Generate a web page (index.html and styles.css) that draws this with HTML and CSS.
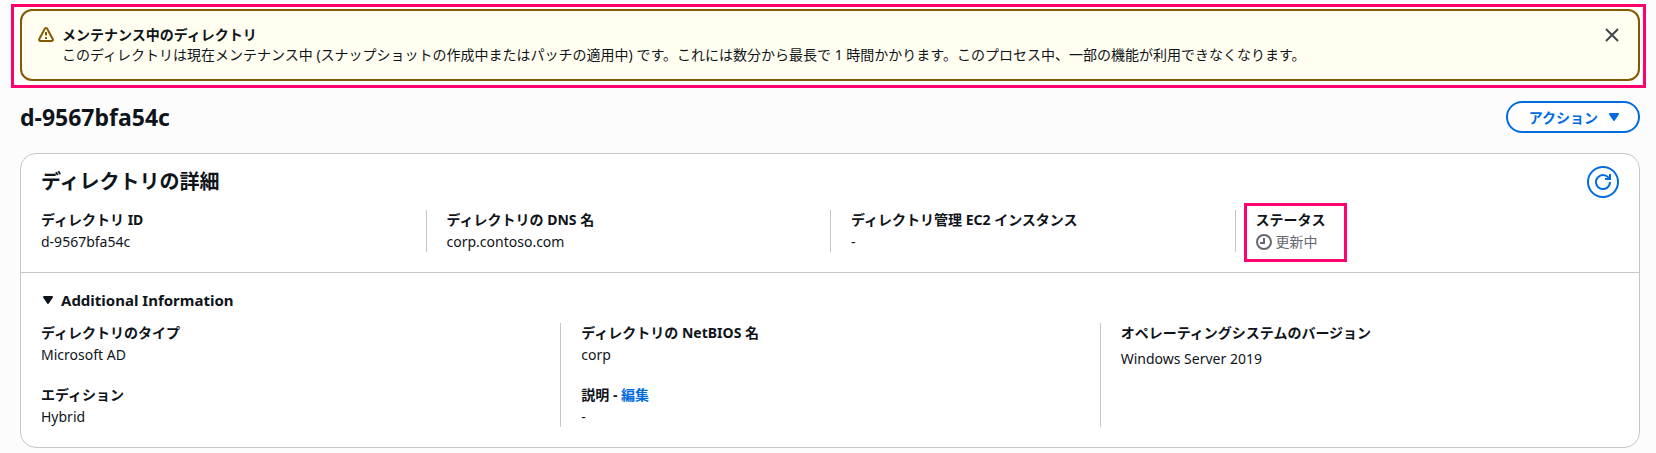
FILE: index.html
```html
<!DOCTYPE html>
<html lang="ja">
<head>
    <meta charset="UTF-8">
    <meta name="viewport" content="width=device-width, initial-scale=1.0">
    <title>d-9567bfa54c</title>
    <link rel="stylesheet" href="styles.css">
</head>
<body>
    <div class="callout">
        <div class="alert" role="alert">
            <svg class="icon alert-icon" viewBox="0 0 16 16" aria-hidden="true">
                <path d="M6.7 1.9a1.4 1.4 0 0 1 2.6 0l5.5 10.4a1.2 1.2 0 0 1-1.1 1.7H2.3a1.2 1.2 0 0 1-1.1-1.7z"/>
                <path d="M8 5v3.500M8 10v2"/>
            </svg>
            <div class="alert-text">
                <strong>メンテナンス中のディレクトリ</strong>
                <p>このディレクトリは現在メンテナンス中 (スナップショットの作成中またはパッチの適用中) です。これには数分から最長で 1 時間かかります。このプロセス中、一部の機能が利用できなくなります。</p>
            </div>
            <button class="close-button" type="button" aria-label="閉じる">
                <svg class="icon" viewBox="0 0 16 16" aria-hidden="true">
                    <path d="m2 2 12 12M14 2 2 14"/>
                </svg>
            </button>
        </div>
    </div>

    <main>
        <div class="page-header">
            <h1>d-9567bfa54c</h1>
            <button class="action-button" type="button">
                アクション
                <svg class="icon caret" viewBox="0 0 16 16" aria-hidden="true">
                    <path d="M4 5h8l-4 6z"/>
                </svg>
            </button>
        </div>

        <section class="card">
            <div class="card-top">
                <div class="card-header">
                    <h2>ディレクトリの詳細</h2>
                    <button class="refresh-button" type="button" aria-label="更新">
                        <svg class="icon" viewBox="0 0 16 16" aria-hidden="true">
                            <path d="M10 5h5V0"/>
                            <path d="M15 8a7 7 0 1 1-.7-3"/>
                        </svg>
                    </button>
                </div>
                <div class="columns four">
                    <dl>
                        <dt>ディレクトリ ID</dt>
                        <dd>d-9567bfa54c</dd>
                    </dl>
                    <dl>
                        <dt>ディレクトリの DNS 名</dt>
                        <dd>corp.contoso.com</dd>
                    </dl>
                    <dl>
                        <dt>ディレクトリ管理 EC2 インスタンス</dt>
                        <dd>-</dd>
                    </dl>
                    <dl class="marked">
                        <dt>ステータス</dt>
                        <dd class="status">
                            <svg class="icon" viewBox="0 0 16 16" aria-hidden="true">
                                <circle cx="8" cy="8" r="7"/>
                                <path d="M8 4v5H4"/>
                            </svg>
                            更新中
                        </dd>
                    </dl>
                </div>
            </div>

            <details open>
                <summary>
                    <svg class="icon caret" viewBox="0 0 16 16" aria-hidden="true">
                        <path d="M3 5h8l-4 6z"/>
                    </svg>
                    Additional Information
                </summary>
                <div class="columns three">
                    <dl>
                        <dt>ディレクトリのタイプ</dt>
                        <dd>Microsoft AD</dd>
                        <dt>エディション</dt>
                        <dd>Hybrid</dd>
                    </dl>
                    <dl>
                        <dt>ディレクトリの NetBIOS 名</dt>
                        <dd>corp</dd>
                        <dt>説明 - <a href="#">編集</a></dt>
                        <dd>-</dd>
                    </dl>
                    <dl class="spaced">
                        <dt>オペレーティングシステムのバージョン</dt>
                        <dd>Windows Server 2019</dd>
                    </dl>
                </div>
            </details>
        </section>
    </main>
</body>
</html>
```

FILE: styles.css
```css
*,
*::before,
*::after {
    box-sizing: border-box;
}

body {
    margin: 0;
    background-color: #fcfcfd;
    color: #0f141a;
    font-family: "Noto Sans", "Noto Sans CJK JP", sans-serif;
    font-size: 14px;
    line-height: 20px;
}

h1,
h2,
p,
dl,
dd {
    margin: 0;
}

button {
    font-family: inherit;
    cursor: pointer;
}

a {
    color: #006ce0;
    text-decoration: none;
}

.icon {
    display: block;
    flex: none;
    width: 16px;
    height: 16px;
    fill: none;
    stroke: currentColor;
    stroke-width: 2;
    overflow: visible;
}

.caret path {
    fill: currentColor;
    stroke-linejoin: round;
}

/* Pink frame round the alert */
.callout {
    margin: 4px 10px 0 11px;
    padding: 2px 3px 4px 6px;
    border: 3px solid #ff006e;
    background-color: #fff;
}

.alert {
    display: flex;
    align-items: flex-start;
    gap: 8px;
    min-height: 72px;
    padding: 14px 16px;
    border: 2px solid #855900;
    border-radius: 12px;
    background-color: #fffef0;
}

.alert-icon {
    margin-top: 2px;
    color: #855900;
}

.alert-text {
    flex: 1;
}

.close-button {
    padding: 2px;
    border: none;
    background: none;
    color: #424650;
}

main {
    padding: 13px 16px 5px 20px;
}

.page-header,
.card-header {
    display: flex;
    justify-content: space-between;
    align-items: center;
}

h1 {
    font-size: 23px;
    line-height: 30px;
}

h2 {
    font-size: 20px;
    line-height: 24px;
}

.action-button {
    display: flex;
    align-items: center;
    gap: 8px;
    height: 32px;
    padding: 0 16px 0 21px;
    border: 2px solid #006ce0;
    border-radius: 20px;
    background-color: #fff;
    color: #006ce0;
    font-size: 14px;
    font-weight: bold;
}

.card {
    margin-top: 20px;
    border: 1px solid #c6c6cd;
    border-radius: 16px;
    background-color: #fff;
}

.card-top {
    padding: 12px 20px 20px;
    border-bottom: 1px solid #c6c6cd;
}

.card-header {
    margin-bottom: 12px;
}

.refresh-button {
    display: flex;
    align-items: center;
    justify-content: center;
    width: 32px;
    height: 32px;
    padding: 0;
    border: 2px solid #006ce0;
    border-radius: 50%;
    background-color: #fff;
    color: #006ce0;
}

.columns {
    display: grid;
    gap: 40px;
}

.four {
    grid-template-columns: repeat(4, 1fr);
}

.three {
    grid-template-columns: repeat(3, 1fr);
}

.columns dl {
    position: relative;
}

.columns dl + dl {
    padding-left: 1px;
}

/* Divider in the middle of the gap */
.columns dl + dl::before {
    content: "";
    position: absolute;
    top: 0;
    bottom: 0;
    left: -20px;
    border-left: 1px solid #c6c6cd;
}

dt {
    font-weight: bold;
}

dd {
    padding-top: 2px;
}

dd + dt {
    margin-top: 20px;
}

.spaced dd {
    padding-top: 6px;
}

.status {
    display: flex;
    align-items: center;
    gap: 4px;
    color: #656871;
}

/* Pink frame round the status */
.marked::after {
    content: "";
    position: absolute;
    top: -7px;
    left: -11px;
    width: 103px;
    height: 59px;
    border: 3px solid #ff006e;
}

details {
    padding: 17px 20px 20px;
}

summary {
    display: flex;
    align-items: center;
    gap: 4px;
    margin-bottom: 13px;
    font-size: 15px;
    font-weight: bold;
    list-style: none;
    cursor: pointer;
}
```
